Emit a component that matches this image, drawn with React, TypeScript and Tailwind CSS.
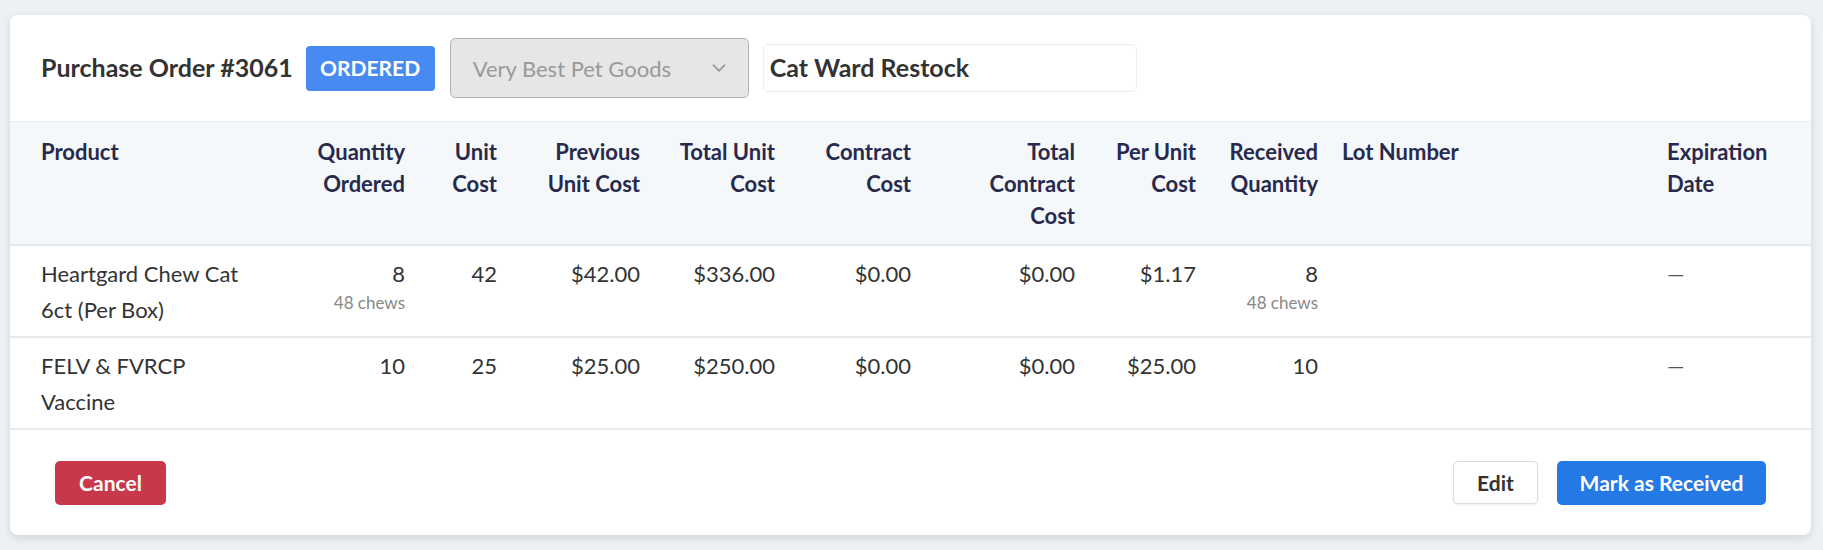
import { ChevronDown } from "lucide-react";

type Row = {
  product: string;
  qty: string;
  qtyNote?: string;
  unitCost: string;
  prevUnitCost: string;
  totalUnitCost: string;
  contractCost: string;
  totalContractCost: string;
  perUnitCost: string;
  received: string;
  receivedNote?: string;
};

const rows: Row[] = [
  {
    product: "Heartgard Chew Cat 6ct (Per Box)",
    qty: "8",
    qtyNote: "48 chews",
    unitCost: "42",
    prevUnitCost: "$42.00",
    totalUnitCost: "$336.00",
    contractCost: "$0.00",
    totalContractCost: "$0.00",
    perUnitCost: "$1.17",
    received: "8",
    receivedNote: "48 chews",
  },
  {
    product: "FELV & FVRCP Vaccine",
    qty: "10",
    unitCost: "25",
    prevUnitCost: "$25.00",
    totalUnitCost: "$250.00",
    contractCost: "$0.00",
    totalContractCost: "$0.00",
    perUnitCost: "$25.00",
    received: "10",
  },
];

function Th({ children, left, first }: { children: React.ReactNode; left?: boolean; first?: boolean }) {
  return (
    <th
      className={`align-top pt-[14px] pb-[12px] ${first ? "pl-[31px] pr-3" : "px-3"} ${
        left ? "text-left" : "text-right"
      } font-bold text-[22px] leading-[32px] text-[#272a4c]`}
    >
      {children}
    </th>
  );
}

function Td({ children, left, first }: { children: React.ReactNode; left?: boolean; first?: boolean }) {
  return (
    <td
      className={`align-top pt-[10px] pb-[8px] ${first ? "pl-[31px] pr-3" : "px-3"} ${
        left ? "text-left" : "text-right"
      } text-[22px] leading-[36px] text-[#333]`}
    >
      {children}
    </td>
  );
}

function Note({ text }: { text: string }) {
  return <div className="text-[17px] leading-[22px] text-[#888]">{text}</div>;
}

export default function App() {
  return (
    <div
      className="min-h-[550px] bg-[#edf1f4] pl-[10px] pr-[12px] pt-[15px]"
      style={{ fontFamily: "Lato, 'Noto Sans', sans-serif" }}
    >
      <div className="w-[1801px] rounded-[8px] bg-white shadow-[0_3px_8px_rgba(0,0,0,0.12)] overflow-hidden">
        {/* Header */}
        <div className="flex h-[106px] items-center pl-[31px]">
          <h1 className="text-[25px] font-bold text-[#333]">Purchase Order #3061</h1>
          <span className="ml-[13px] flex h-[45px] w-[129px] shrink-0 items-center justify-center rounded-[4px] bg-[#478bf2] text-[21px] font-bold text-white">
            ORDERED
          </span>
          <div className="ml-[15px] flex h-[60px] w-[299px] shrink-0 items-center justify-between rounded-[5px] border border-[#b3b3b3] bg-[#e6e6e6] pl-[22px] pr-[18px]">
            <span className="text-[22px] text-[#999]">Very Best Pet Goods</span>
            <ChevronDown className="h-[22px] w-[22px] text-[#a0a0a0]" strokeWidth={2} />
          </div>
          <div className="ml-[14px] flex h-[48px] w-[374px] shrink-0 items-center rounded-[5px] border border-[#eeeeee] pl-[6px]">
            <span className="text-[25px] font-bold text-[#333]">Cat Ward Restock</span>
          </div>
        </div>

        {/* Table */}
        <table className="w-[1801px] table-fixed border-collapse">
          <colgroup>
            <col className="w-[262px]" />
            <col className="w-[145px]" />
            <col className="w-[92px]" />
            <col className="w-[143px]" />
            <col className="w-[135px]" />
            <col className="w-[136px]" />
            <col className="w-[164px]" />
            <col className="w-[121px]" />
            <col className="w-[122px]" />
            <col className="w-[325px]" />
            <col className="w-[156px]" />
          </colgroup>
          <thead>
            <tr className="border-t border-b-2 border-t-[#e6eaf0] border-b-[#e3e7eb] bg-[#f5f8fb]">
              <Th left first>Product</Th>
              <Th>Quantity<br />Ordered</Th>
              <Th>Unit<br />Cost</Th>
              <Th>Previous<br />Unit Cost</Th>
              <Th>Total Unit<br />Cost</Th>
              <Th>Contract<br />Cost</Th>
              <Th>Total<br />Contract<br />Cost</Th>
              <Th>Per Unit<br />Cost</Th>
              <Th>Received<br />Quantity</Th>
              <Th left>Lot Number</Th>
              <Th left>Expiration<br />Date</Th>
            </tr>
          </thead>
          <tbody>
            {rows.map((r) => (
              <tr key={r.product} className="h-[90px] border-b-2 border-[#e6e9ed]">
                <Td left first>{r.product}</Td>
                <Td>
                  {r.qty}
                  {r.qtyNote && <Note text={r.qtyNote} />}
                </Td>
                <Td>{r.unitCost}</Td>
                <Td>{r.prevUnitCost}</Td>
                <Td>{r.totalUnitCost}</Td>
                <Td>{r.contractCost}</Td>
                <Td>{r.totalContractCost}</Td>
                <Td>{r.perUnitCost}</Td>
                <Td>
                  {r.received}
                  {r.receivedNote && <Note text={r.receivedNote} />}
                </Td>
                <Td left>{""}</Td>
                <Td left>
                  <span className="text-[#555]">—</span>
                </Td>
              </tr>
            ))}
          </tbody>
        </table>

        {/* Footer */}
        <div className="flex h-[105px] items-center justify-between px-[45px]">
          <button className="h-[44px] w-[111px] rounded-[5px] bg-[#c9374b] text-[21px] font-bold text-white">
            Cancel
          </button>
          <div className="flex items-center gap-[19px]">
            <button className="h-[43px] w-[85px] rounded-[5px] border border-[#dcdcdc] bg-white text-[21px] font-bold text-[#333] shadow-[0_1px_2px_rgba(0,0,0,0.08)]">
              Edit
            </button>
            <button className="h-[44px] w-[209px] rounded-[5px] bg-[#2579e4] text-[21px] font-bold text-white">
              Mark as Received
            </button>
          </div>
        </div>
      </div>
    </div>
  );
}
